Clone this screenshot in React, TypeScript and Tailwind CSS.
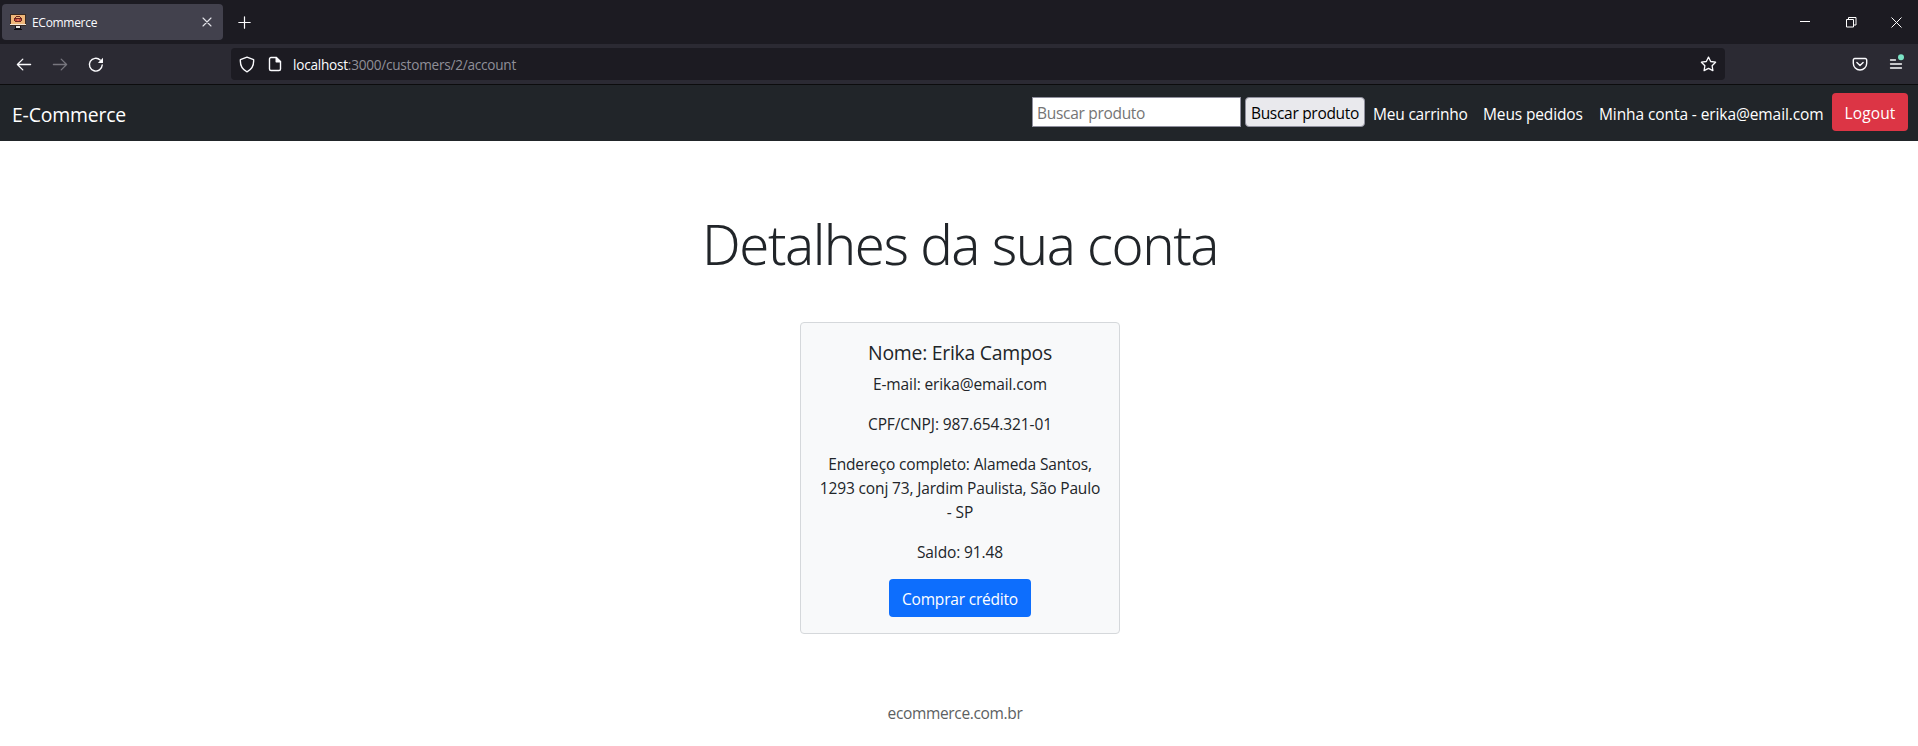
import React from 'react';

function Favicon() {
  return (
    <svg width="16" height="17" viewBox="0 0 16 17" shapeRendering="crispEdges">
      <rect x="0" y="0" width="16" height="12" fill="#3a2a22" />
      <rect x="1" y="1" width="14" height="9" fill="#efb679" />
      <rect x="0" y="10" width="16" height="1" fill="#f3e6d6" />
      <path d="M5 3h1V2h4v1h1v1h1v3h-1v1H5V7H4V4h1z" fill="#6b2620" />
      <path d="M5 5h6v2H5z" fill="#c44a3c" />
      <path d="M6 3h4v1H6z" fill="#efb679" />
      <path d="M7 5h2v2H7z" fill="#e2705a" />
      <rect x="5" y="12" width="6" height="3" fill="#15141a" />
      <rect x="6" y="12" width="4" height="2" fill="#e9e6e3" />
      <rect x="4" y="15" width="8" height="1" fill="#0d0c10" />
    </svg>
  );
}

function TabStrip() {
  return (
    <div className="flex h-[44px] bg-[#1c1b22] pl-[2px] pt-[4px]">
      <div className="flex h-[36px] w-[221px] items-center rounded-[4px] bg-[#42414d] pl-[8px] pr-[9px]">
        <Favicon />
        <span className="ml-[6px] pt-[2px] text-[12px] leading-[16px] tracking-[-0.3px] text-[#fbfbfe]">ECommerce</span>
        <svg className="ml-auto" width="14" height="14" viewBox="0 0 14 14" fill="none" stroke="#e4e4ea" strokeWidth="1.1" strokeLinecap="round">
          <path d="M3 3l8 8M11 3l-8 8" />
        </svg>
      </div>
      <svg className="ml-[15px] mt-[12px]" width="13" height="13" viewBox="0 0 13 13" fill="none" stroke="#fbfbfe" strokeWidth="1.2" strokeLinecap="round">
        <path d="M6.5 .8v11.4M.8 6.5h11.4" />
      </svg>
      <div className="ml-auto flex h-[36px] items-center pr-[16px]">
        <svg width="11" height="11" viewBox="0 0 11 11" fill="none" stroke="#fff" strokeWidth="1">
          <path d="M0 4.500h10" />
        </svg>
        <svg className="ml-[35px]" width="11" height="11" viewBox="0 0 11 11" fill="none" stroke="#fff" strokeWidth="1">
          <path d="M.5 2.5h7v7.500h-7zM2.5 2.5v-2h7.500v7.500h-2" />
        </svg>
        <svg className="ml-[34px]" width="11" height="11" viewBox="0 0 11 11" fill="none" stroke="#fff" strokeWidth="1">
          <path d="M.5.5l10 10M10.5.5l-10 10" />
        </svg>
      </div>
    </div>
  );
}

function Toolbar() {
  return (
    <div className="flex h-[41px] items-center border-b border-[#0c0c0d] bg-[#2b2a33]">
      <svg className="ml-[16px]" width="16" height="16" viewBox="0 0 16 16" fill="none" stroke="#fbfbfe" strokeWidth="1.3" strokeLinecap="round" strokeLinejoin="round">
        <path d="M14.6 8.500H1.4M6.8 3.100L1.4 8.500l5.4 5.4" />
      </svg>
      <svg className="ml-[20px]" width="16" height="16" viewBox="0 0 16 16" fill="none" stroke="#77767e" strokeWidth="1.3" strokeLinecap="round" strokeLinejoin="round">
        <path d="M1.4 8.500h13.2M9.2 3.100l5.4 5.4-5.4 5.4" />
      </svg>
      <svg className="ml-[20px] overflow-visible" width="16" height="16" viewBox="0 0 16 16" fill="none" stroke="#fbfbfe" strokeWidth="1.4" strokeLinecap="round">
        <path d="M14.2 9A6.4 6.4 0 1 1 12.2 4" />
        <path d="M15 1.8v4.600a.5.5 0 0 1-.5.5H9.900z" fill="#fbfbfe" stroke="none" />
      </svg>
      <div className="ml-[127px] flex h-[32px] w-[1494px] items-center rounded-[4px] bg-[#1c1b22] pl-[8px] pr-[8px]">
        <svg width="16" height="17" viewBox="0 0 16 17" fill="none" stroke="#fbfbfe" strokeWidth="1.4" strokeLinejoin="round">
          <path d="M8 1.2L14.600 3.6C15 8.8 12.800 13.6 8 15.8 3.200 13.6 1 8.8 1.400 3.6z" />
        </svg>
        <svg className="ml-[12px]" width="16" height="16" viewBox="0 0 16 16" fill="none" stroke="#fbfbfe" strokeWidth="1.4" strokeLinejoin="round">
          <path d="M9.2 1.5H4A1.5 1.5 0 0 0 2.5 3v10A1.5 1.5 0 0 0 4 14.500h8a1.500 1.500 0 0 0 1.500-1.500V5.800z" />
          <path d="M9.200 1.500v4.300h4.300z" fill="#fbfbfe" />
        </svg>
        <span className="ml-[10px] pt-[2px] text-[13.6px] leading-[20px] tracking-[-0.24px] text-[#8f8f98]">
          <span className="text-[#fbfbfe]">localhost</span>:3000/customers/2/account
        </span>
        <svg className="ml-auto" width="17" height="16" viewBox="0 0 17 16" fill="none" stroke="#fbfbfe" strokeWidth="1.3" strokeLinejoin="round">
          <path d="M8.500 1.100l2.200 4.400 4.900.7-3.500 3.500.8 4.900-4.400-2.300-4.400 2.300.8-4.900L1.400 6.200l4.900-.7z" />
        </svg>
      </div>
      <svg className="ml-[127px]" width="16" height="16" viewBox="0 0 16 16" fill="none" stroke="#fbfbfe" strokeWidth="1.400" strokeLinecap="round" strokeLinejoin="round">
        <path d="M2.800 2.500h10.400a1.500 1.500 0 0 1 1.500 1.500v3.300a6.700 6.700 0 0 1-13.400 0V4a1.500 1.500 0 0 1 1.500-1.500z" />
        <path d="M4.900 6.400L8 9.400l3.100-3" />
      </svg>
      <svg className="ml-[20px] overflow-visible" width="16" height="18" viewBox="0 0 16 18" fill="none" stroke="#fbfbfe" strokeWidth="1.300" strokeLinecap="round">
        <path d="M2.500 5h5M2.500 9h11M2.500 13h11" />
        <circle cx="13" cy="2.200" r="3" fill="#7be3c5" stroke="none" />
      </svg>
    </div>
  );
}

function Navbar() {
  return (
    <nav className="flex h-[56px] items-start bg-[#212529] pl-[12px] pr-[10px] text-[15.5px] leading-[24px] text-white">
      <a className="mt-[15px] text-[19.4px] leading-[30px] tracking-[-0.18px]">E-Commerce</a>
      <input
        className="ml-auto mt-[12px] h-[30px] w-[209px] border border-[#8f8f9d] bg-white px-[4px] pt-[2px] tracking-[-0.3px] text-black outline-none placeholder:text-[#757575]"
        placeholder="Buscar produto"
      />
      <button className="ml-[4px] mt-[12px] h-[30px] w-[120px] whitespace-nowrap rounded-[4px] border border-[#8f8f9d] bg-[#e9e9ed] pt-[2px] tracking-[-0.3px] text-black">
        Buscar produto
      </button>
      <a className="ml-[8px] mt-[17px] w-[95px] whitespace-nowrap tracking-[-0.2px]">Meu carrinho</a>
      <a className="ml-[15px] mt-[17px] w-[100px] whitespace-nowrap tracking-[-0.13px]">Meus pedidos</a>
      <a className="ml-[16px] mt-[17px] w-[224px] whitespace-nowrap tracking-[-0.09px]">Minha conta - erika@email.com</a>
      <button className="ml-[9px] mt-[8px] h-[38px] w-[76px] rounded-[4px] bg-[#dc3545] pt-[2px] tracking-[0.13px]">Logout</button>
    </nav>
  );
}

function AccountCard() {
  return (
    <section className="mt-[44px] flex h-[312px] w-[320px] flex-col items-center whitespace-nowrap rounded-[4px] border border-[#d5d8db] bg-[#f8f9fa] pt-[18px] text-center text-[15.5px] leading-[24px]">
      <h5 className="mb-[7px] text-[19.4px] tracking-[-0.26px]">Nome: Erika Campos</h5>
      <p className="mb-[16px] tracking-[-0.12px]">E-mail: erika@email.com</p>
      <p className="mb-[16px] tracking-[-0.1px]">CPF/CNPJ: 987.654.321-01</p>
      <p className="mb-[16px] tracking-[-0.15px]">
        Endereço completo: Alameda Santos,
        <br />
        1293 conj 73, Jardim Paulista, São Paulo
        <br />- SP
      </p>
      <p className="mb-[15px] tracking-[-0.12px]">Saldo: 91.48</p>
      <button className="h-[38px] w-[142px] rounded-[4px] bg-[#0d6efd] pt-px tracking-[-0.2px] text-white">Comprar crédito</button>
    </section>
  );
}

export default function App() {
  return (
    <div className="flex h-[746px] w-full flex-col overflow-hidden bg-white font-['Open_Sans','Noto_Sans',sans-serif] text-[#212529]">
      <TabStrip />
      <Toolbar />
      <Navbar />
      <main className="flex flex-col items-center pl-[2px]">
        <h1 className="mt-[70px] whitespace-nowrap font-['Noto_Sans'] text-[54.4px] font-light leading-[67px] tracking-[-1.45px]">
          Detalhes da sua conta
        </h1>
        <AccountCard />
      </main>
      <footer className="mt-[67px] pr-[8px] text-center text-[15.5px] leading-[24px] tracking-[-0.34px] text-[#5c5f62]">ecommerce.com.br</footer>
    </div>
  );
}
